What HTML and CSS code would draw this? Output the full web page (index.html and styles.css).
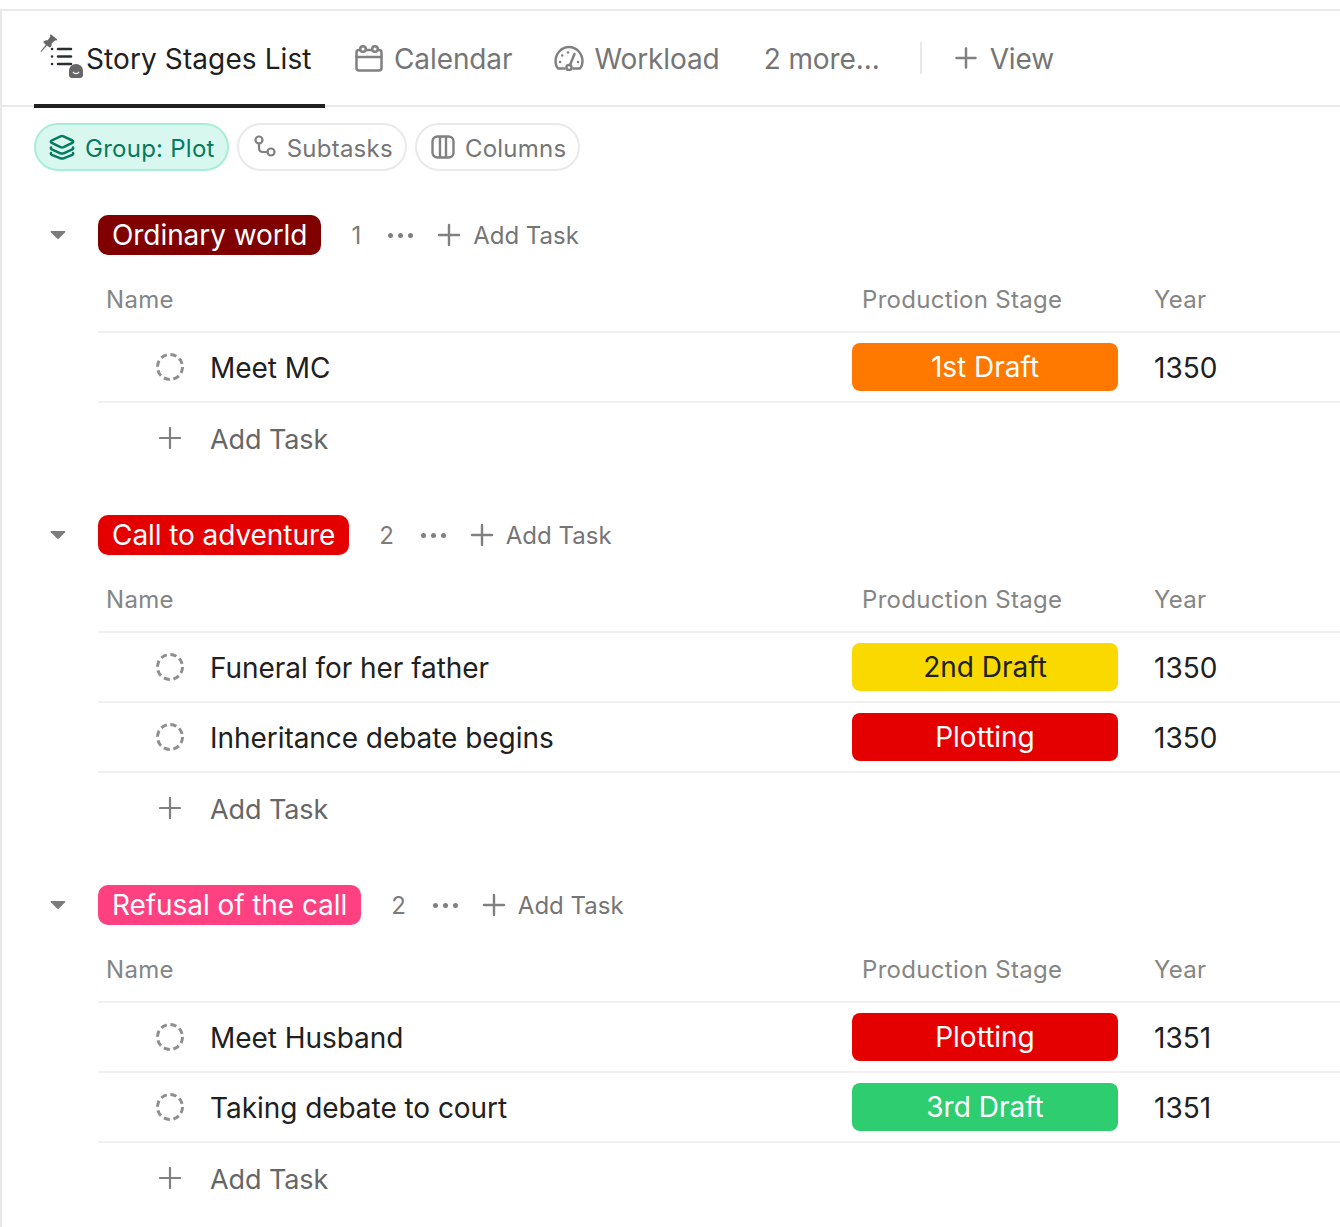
FILE: index.html
```html
<!DOCTYPE html>
<html lang="en">
<head>
<meta charset="utf-8">
<title>Story Stages List</title>
<link rel="stylesheet" href="styles.css">
</head>
<body>
<div class="page">
  <nav class="tabs">
    <div class="tab tab-active">
      <span class="tab-list-icon">
        <svg class="pin" width="18" height="18" viewBox="0 0 18 18"><path d="M0.500 17.500L5.800 10.700L3.800 8.800C3.300 8.300 3.400 7.600 3.900 7.200C5 6.300 6.300 6 7.600 6.200L10.300 2.800L10 1.800C9.800 0.900 10.600 0.300 11.400 0.700L16.800 5C17.500 5.600 17.100 6.600 16.200 6.500L14.900 6.400L11.600 9.400C11.900 10.700 11.500 12 10.600 13C10.200 13.500 9.500 13.500 9 13L7 11.400L1.200 17.900Z" fill="#666"/></svg>
        <svg class="list" width="26" height="22" viewBox="0 0 26 22" fill="none" stroke="#2a2e34" stroke-width="2.500" stroke-linecap="round"><path d="M8 3H21M8 10.500H21M8 18H21"/><path d="M2 3H2.100M2 10.500H2.100M2 18H2.100"/></svg>
        <svg class="bot" width="14" height="14" viewBox="0 0 14 14"><path d="M0 7C0 3 3 0 7 0S14 3 14 7V11C14 12.700 12.700 14 11 14H3C1.300 14 0 12.700 0 11Z" fill="#666"/><path d="M4.300 8.200C5.300 10 8.700 10 9.700 8.200" stroke="#fff" stroke-width="1.300" fill="none" stroke-linecap="round"/></svg>
      </span>
      <span class="tab-text">Story Stages List</span>
    </div>
    <div class="tab tab-cal">
      <svg width="28" height="28" viewBox="0 0 28 28" fill="none" stroke="#808080" stroke-width="2.500" stroke-linecap="round" stroke-linejoin="round"><path d="M4.500 6H4C2.600 6 1.500 7.100 1.500 8.500V24C1.500 25.400 2.600 26.500 4 26.500H24C25.400 26.500 26.500 25.400 26.500 24V8.500C26.500 7.100 25.400 6 24 6H23.500"/><path d="M11.500 6H16.500"/><path d="M1.500 13H26.500"/><circle cx="8" cy="5" r="2.800"/><circle cx="20" cy="5" r="2.800"/></svg>
      <span class="tab-text">Calendar</span>
    </div>
    <div class="tab">
      <svg width="30" height="26" viewBox="0 0 30 26" fill="none" stroke="#808080" stroke-width="2.500" stroke-linecap="round" stroke-linejoin="round"><path d="M10.500 23.500H4C2.300 21.500 1.500 19 1.500 16.500C1.500 8.500 7.500 2 15 2S28.500 8.500 28.500 16.500C28.500 19 27.700 21.500 26 23.500H19.500"/><circle cx="15" cy="22.500" r="2.600"/><path d="M16 20L20.500 9"/><path d="M14 7.500V7.600M8.200 10.500V10.600M6 17H6.100M24 17H24.100"/></svg>
      <span class="tab-text">Workload</span>
    </div>
    <div class="tab tab-more"><span class="tab-text">2 more...</span></div>
    <div class="tab-sep"></div>
    <div class="tab tab-view">
      <svg width="24" height="24" viewBox="0 0 24 24" fill="none" stroke="#808080" stroke-width="2.500" stroke-linecap="round"><path d="M12 2.500V21.500M2.500 12H21.500"/></svg>
      <span class="tab-text">View</span>
    </div>
  </nav>

  <div class="filters">
    <div class="pill pill-on">
      <svg width="26" height="26" viewBox="0 0 26 26" fill="none" stroke="#067a5f" stroke-width="2.500" stroke-linejoin="round" stroke-linecap="round"><path d="M11.500 2.300C12.500 1.900 13.500 1.900 14.500 2.300L23.300 6.500C24.500 7.100 24.500 8.300 23.300 8.900L14.500 13.100C13.500 13.500 12.500 13.500 11.500 13.100L2.700 8.900C1.500 8.300 1.500 7.100 2.700 6.500Z"/><path d="M2 13.500C1.700 14.300 2 15 2.700 15.300L11.500 19.300C12.500 19.700 13.500 19.700 14.500 19.300L23.300 15.300C24 15 24.300 14.300 24 13.500"/><path d="M2 19C1.700 19.800 2 20.500 2.700 20.800L11.500 24.300C12.500 24.700 13.500 24.700 14.500 24.300L23.300 20.800C24 20.500 24.300 19.800 24 19"/></svg>
      <span class="pill-text">Group: Plot</span>
    </div>
    <div class="pill">
      <svg width="24" height="24" viewBox="0 0 24 24" fill="none" stroke="#808080" stroke-width="2.200" stroke-linecap="round"><circle cx="6" cy="5" r="3.500"/><circle cx="18" cy="17" r="3.500"/><path d="M6 8.500V13C6 15.500 7.500 17 10 17H14.500"/></svg>
      <span class="pill-text">Subtasks</span>
    </div>
    <div class="pill">
      <svg width="24" height="24" viewBox="0 0 24 24" fill="none" stroke="#808080" stroke-width="2.400"><rect x="1.500" y="1.500" width="21" height="21" rx="5"/><path d="M9 1.500V22.500M15 1.500V22.500"/></svg>
      <span class="pill-text">Columns</span>
    </div>
  </div>

  <section class="group">
    <header class="group-head">
      <svg class="caret" width="16" height="10" viewBox="0 0 16 10"><path d="M1.500 1H14.500C15.300 1 15.600 1.700 15.100 2.300L9 8.600C8.400 9.100 7.600 9.100 7 8.600L0.900 2.300C0.400 1.700 0.700 1 1.500 1Z" fill="#7c7c7c"/></svg>
      <span class="group-name c-maroon">Ordinary world</span>
      <span class="count">1</span>
      <span class="dots"><i></i><i></i><i></i></span>
      <svg class="plus-sm" width="24" height="24" viewBox="0 0 24 24" fill="none" stroke="#808080" stroke-width="2.400" stroke-linecap="round"><path d="M12 2V22M2 12H22"/></svg>
      <span class="add-sm">Add Task</span>
    </header>
    <div class="row-head"><span class="col-name">Name</span><span class="col-stage">Production Stage</span><span class="col-year">Year</span></div>
    <div class="row"><svg class="status" width="28" height="28" viewBox="0 0 28 28"><circle cx="14" cy="14" r="12.500" fill="none" stroke="#8e8e8e" stroke-width="3" stroke-dasharray="6.200 3.620"/></svg><span class="task">Meet MC</span><span class="stage c-orange">1st Draft</span><span class="year">1350</span></div>
    <div class="add-row"><svg width="22" height="22" viewBox="0 0 22 22" fill="none" stroke="#808080" stroke-width="2.200" stroke-linecap="round"><path d="M11 1V21M1 11H21"/></svg><span>Add Task</span></div>
  </section>

  <section class="group">
    <header class="group-head">
      <svg class="caret" width="16" height="10" viewBox="0 0 16 10"><path d="M1.500 1H14.500C15.300 1 15.600 1.700 15.100 2.300L9 8.600C8.400 9.100 7.600 9.100 7 8.600L0.900 2.300C0.400 1.700 0.700 1 1.500 1Z" fill="#7c7c7c"/></svg>
      <span class="group-name c-red">Call to adventure</span>
      <span class="count">2</span>
      <span class="dots"><i></i><i></i><i></i></span>
      <svg class="plus-sm" width="24" height="24" viewBox="0 0 24 24" fill="none" stroke="#808080" stroke-width="2.400" stroke-linecap="round"><path d="M12 2V22M2 12H22"/></svg>
      <span class="add-sm">Add Task</span>
    </header>
    <div class="row-head"><span class="col-name">Name</span><span class="col-stage">Production Stage</span><span class="col-year">Year</span></div>
    <div class="row"><svg class="status" width="28" height="28" viewBox="0 0 28 28"><circle cx="14" cy="14" r="12.500" fill="none" stroke="#8e8e8e" stroke-width="3" stroke-dasharray="6.200 3.620"/></svg><span class="task">Funeral for her father</span><span class="stage c-yellow">2nd Draft</span><span class="year">1350</span></div>
    <div class="row"><svg class="status" width="28" height="28" viewBox="0 0 28 28"><circle cx="14" cy="14" r="12.500" fill="none" stroke="#8e8e8e" stroke-width="3" stroke-dasharray="6.200 3.620"/></svg><span class="task">Inheritance debate begins</span><span class="stage c-red">Plotting</span><span class="year">1350</span></div>
    <div class="add-row"><svg width="22" height="22" viewBox="0 0 22 22" fill="none" stroke="#808080" stroke-width="2.200" stroke-linecap="round"><path d="M11 1V21M1 11H21"/></svg><span>Add Task</span></div>
  </section>

  <section class="group">
    <header class="group-head">
      <svg class="caret" width="16" height="10" viewBox="0 0 16 10"><path d="M1.500 1H14.500C15.300 1 15.600 1.700 15.100 2.300L9 8.600C8.400 9.100 7.600 9.100 7 8.600L0.900 2.300C0.400 1.700 0.700 1 1.500 1Z" fill="#7c7c7c"/></svg>
      <span class="group-name c-pink">Refusal of the call</span>
      <span class="count">2</span>
      <span class="dots"><i></i><i></i><i></i></span>
      <svg class="plus-sm" width="24" height="24" viewBox="0 0 24 24" fill="none" stroke="#808080" stroke-width="2.400" stroke-linecap="round"><path d="M12 2V22M2 12H22"/></svg>
      <span class="add-sm">Add Task</span>
    </header>
    <div class="row-head"><span class="col-name">Name</span><span class="col-stage">Production Stage</span><span class="col-year">Year</span></div>
    <div class="row"><svg class="status" width="28" height="28" viewBox="0 0 28 28"><circle cx="14" cy="14" r="12.500" fill="none" stroke="#8e8e8e" stroke-width="3" stroke-dasharray="6.200 3.620"/></svg><span class="task">Meet Husband</span><span class="stage c-red">Plotting</span><span class="year">1351</span></div>
    <div class="row"><svg class="status" width="28" height="28" viewBox="0 0 28 28"><circle cx="14" cy="14" r="12.500" fill="none" stroke="#8e8e8e" stroke-width="3" stroke-dasharray="6.200 3.620"/></svg><span class="task">Taking debate to court</span><span class="stage c-green">3rd Draft</span><span class="year">1351</span></div>
    <div class="add-row"><svg width="22" height="22" viewBox="0 0 22 22" fill="none" stroke="#808080" stroke-width="2.200" stroke-linecap="round"><path d="M11 1V21M1 11H21"/></svg><span>Add Task</span></div>
  </section>
</div>
</body>
</html>
```
FILE: styles.css
```css
* { box-sizing: border-box; }
html, body { margin: 0; padding: 0; height: 100%; overflow: hidden; background: #fff; }
body { font-family: Inter, "Liberation Sans", sans-serif; color: #202020; }
.page { margin-top: 9px; border-top: 2px solid #e9e9e9; border-left: 2px solid #e9e9e9; height: 1218px; }

.tabs { display: flex; align-items: center; height: 96px; border-bottom: 2px solid #e9e9e9; padding-left: 32px; font-size: 28px; font-weight: 400; color: #757575; letter-spacing: -0.1px; }
.tab { display: flex; align-items: center; gap: 10px; height: 96px; margin-right: 44px; }
.tab-text { padding-top: 2px; }
.tab-active { position: relative; width: 291px; margin-right: 30px; color: #202020; padding-left: 6px; gap: 0; letter-spacing: 0.1px; }
.tab-active::after { content: ""; position: absolute; left: 0; right: 0; bottom: -2px; height: 4px; background: #202020; }
.tab-list-icon { position: relative; width: 46px; height: 48px; flex: none; }
.tab-list-icon .pin { position: absolute; left: 0; top: 0; }
.tab-list-icon .list { position: absolute; left: 10px; top: 12px; }
.tab-list-icon .bot { position: absolute; left: 29px; top: 30px; }
.tab-cal { gap: 11px; margin-right: 42px; }
.tab-more { margin-right: 40px; }
.tab-sep { width: 2px; height: 32px; background: #e9e9e9; margin-right: 32px; }
.tab-view { gap: 12px; }

.filters { display: flex; gap: 8px; padding: 16px 0 0 32px; height: 108px; font-size: 24px; font-weight: 400; color: #757575; letter-spacing: 0.25px; }
.pill { display: flex; align-items: center; gap: 10px; height: 48px; padding: 0 12px 0 14px; border: 2px solid #e9e9e9; border-radius: 24px; }
.pill-text { padding-top: 2px; }
.pill-on { background: #d8f8ef; border-color: #a8ecd9; color: #067a5f; padding: 0 12px 0 13px; }

.group { margin-bottom: 40px; }
.group-head { display: flex; align-items: center; height: 40px; }
.caret { margin-left: 48px; margin-right: 32px; flex: none; }
.group-name { height: 40px; line-height: 41px; padding: 0 14px; border-radius: 10px; font-size: 28px; font-weight: 400; color: #fff; white-space: nowrap; letter-spacing: -0.07px; }
.count { margin-left: 30px; font-size: 24px; font-weight: 400; color: #7c7c7c; }
.dots { display: flex; gap: 5px; margin-left: 27px; }
.dots i { width: 5px; height: 5px; border-radius: 50%; background: #808080; }
.plus-sm { margin-left: 24px; }
.add-sm { margin-left: 12px; font-size: 24px; font-weight: 400; color: #757575; }

.row-head { display: flex; align-items: center; height: 78px; padding-top: 13px; margin-left: 96px; border-bottom: 2px solid #f0f0f0; font-size: 24px; font-weight: 400; color: #858585; letter-spacing: 0.3px; }
.col-name { margin-left: 8px; width: 756px; }
.col-stage { width: 292px; }

.row { display: flex; align-items: center; height: 70px; margin-left: 96px; border-bottom: 2px solid #f0f0f0; }
.status { margin-left: 58px; flex: none; }
.task { margin-left: 26px; width: 642px; padding-top: 1px; font-size: 28px; font-weight: 400; color: #202020; white-space: nowrap; letter-spacing: -0.05px; }
.stage { width: 266px; height: 48px; line-height: 49px; border-radius: 8px; text-align: center; font-size: 28px; font-weight: 400; color: #fff; }
.year { margin-left: 36px; padding-top: 1px; font-size: 28px; font-weight: 400; color: #202020; }

.add-row { display: flex; align-items: center; height: 72px; margin-left: 96px; padding-left: 61px; gap: 29px; font-size: 27px; font-weight: 400; color: #666; letter-spacing: -0.1px; }
.add-row svg { flex: none; margin-top: -2px; }

.c-maroon { background: #800000; }
.c-red { background: #e50000; }
.c-pink { background: #ff4081; }
.c-orange { background: #ff7800; }
.c-yellow { background: #fad900; color: #202020; }
.c-green { background: #2ecd6f; }
```
